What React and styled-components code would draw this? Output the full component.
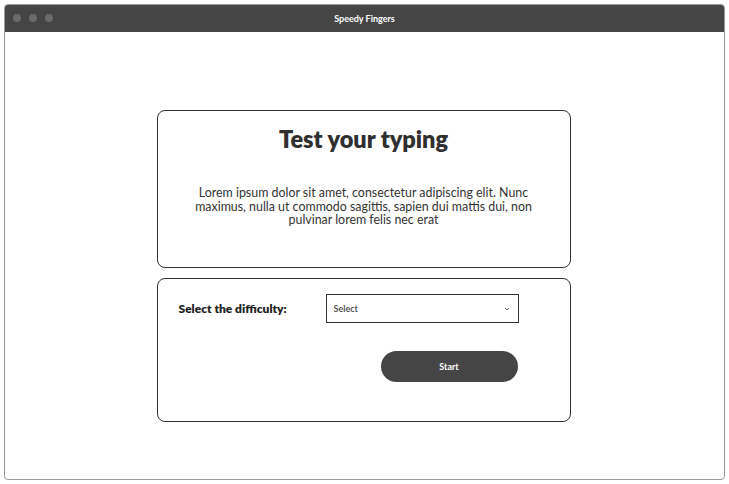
import React from 'react';
import styled, { createGlobalStyle } from 'styled-components';

const GlobalStyle = createGlobalStyle`
  html, body {
    margin: 0;
    padding: 0;
    background: #ffffff;
  }
  body {
    font-family: Lato, "Liberation Sans", sans-serif;
    color: #333;
  }
`;

const Window = styled.div`
  margin: 4px;
  height: 476px;
  border: 1px solid #9a9a9a;
  border-radius: 4px;
  box-sizing: border-box;
  overflow: hidden;
  display: flex;
  flex-direction: column;
`;

const TitleBar = styled.div`
  position: relative;
  height: 27px;
  background: #454545;
  display: flex;
  align-items: center;
  justify-content: center;
  flex-shrink: 0;
`;

const Lights = styled.div`
  position: absolute;
  left: 8px;
  top: 9px;
  display: flex;
  gap: 8px;
`;

const Light = styled.span`
  width: 8px;
  height: 8px;
  border-radius: 50%;
  background: #6a6a6a;
`;

const Title = styled.div`
  color: #fff;
  font-size: 9px;
  font-weight: 700;
`;

const Content = styled.div`
  flex: 1;
  display: flex;
  flex-direction: column;
  align-items: center;
  padding: 78px 2px 0 0;
  gap: 10px;
`;

const Card = styled.div`
  width: 414px;
  height: ${p => p.$h}px;
  box-sizing: border-box;
  border: 1px solid #333;
  border-radius: 8px;
  background: #fff;
`;

const IntroCard = styled(Card)`
  display: flex;
  flex-direction: column;
  align-items: center;
  padding: 13px 30px 0;
`;

const Heading = styled.h1`
  margin: 0;
  font-size: 23.5px;
  font-weight: 800;
  color: #2f2f2f;
  line-height: 30px;
`;

const Blurb = styled.p`
  margin: 32px 0 0;
  font-size: 12.4px;
  line-height: 13.5px;
  text-align: center;
  color: #333;
`;

const SetupCard = styled(Card)`
  display: grid;
  grid-template-columns: 147px 193px;
  grid-template-rows: 29px 31px;
  row-gap: 28px;
  align-items: center;
  padding: 15px 0 0 21px;
`;

const Label = styled.label`
  font-size: 12px;
  font-weight: 800;
  color: #222;
`;

const SelectBox = styled.div`
  height: 29px;
  box-sizing: border-box;
  border: 1.5px solid #333;
  display: flex;
  align-items: center;
  justify-content: space-between;
  padding: 0 8px 0 7px;
  font-size: 9px;
  font-weight: 700;
  color: #555;
`;

const StartButton = styled.button`
  grid-column: 2;
  justify-self: end;
  width: 137px;
  height: 31px;
  border: none;
  border-radius: 16px;
  background: #454545;
  color: #fff;
  font-family: inherit;
  font-size: 9px;
  font-weight: 700;
  margin-right: 1px;
`;

const Chevron = () => (
  <svg width="6" height="4" viewBox="0 0 6 4">
    <path d="M1 1 L3 3 L5 1" fill="none" stroke="#666" strokeWidth="1" />
  </svg>
);

const App = () => (
  <>
    <GlobalStyle />
    <Window>
      <TitleBar>
        <Lights>
          <Light />
          <Light />
          <Light />
        </Lights>
        <Title>Speedy Fingers</Title>
      </TitleBar>
      <Content>
        <IntroCard $h={158}>
          <Heading>Test your typing</Heading>
          <Blurb>
            Lorem ipsum dolor sit amet, consectetur adipiscing elit. Nunc maximus, nulla ut commodo sagittis, sapien dui mattis dui, non pulvinar lorem felis nec erat
          </Blurb>
        </IntroCard>
        <SetupCard $h={144}>
          <Label>Select the difficulty:</Label>
          <SelectBox>
            <span>Select</span>
            <Chevron />
          </SelectBox>
          <StartButton>Start</StartButton>
        </SetupCard>
      </Content>
    </Window>
  </>
);

export default App;
